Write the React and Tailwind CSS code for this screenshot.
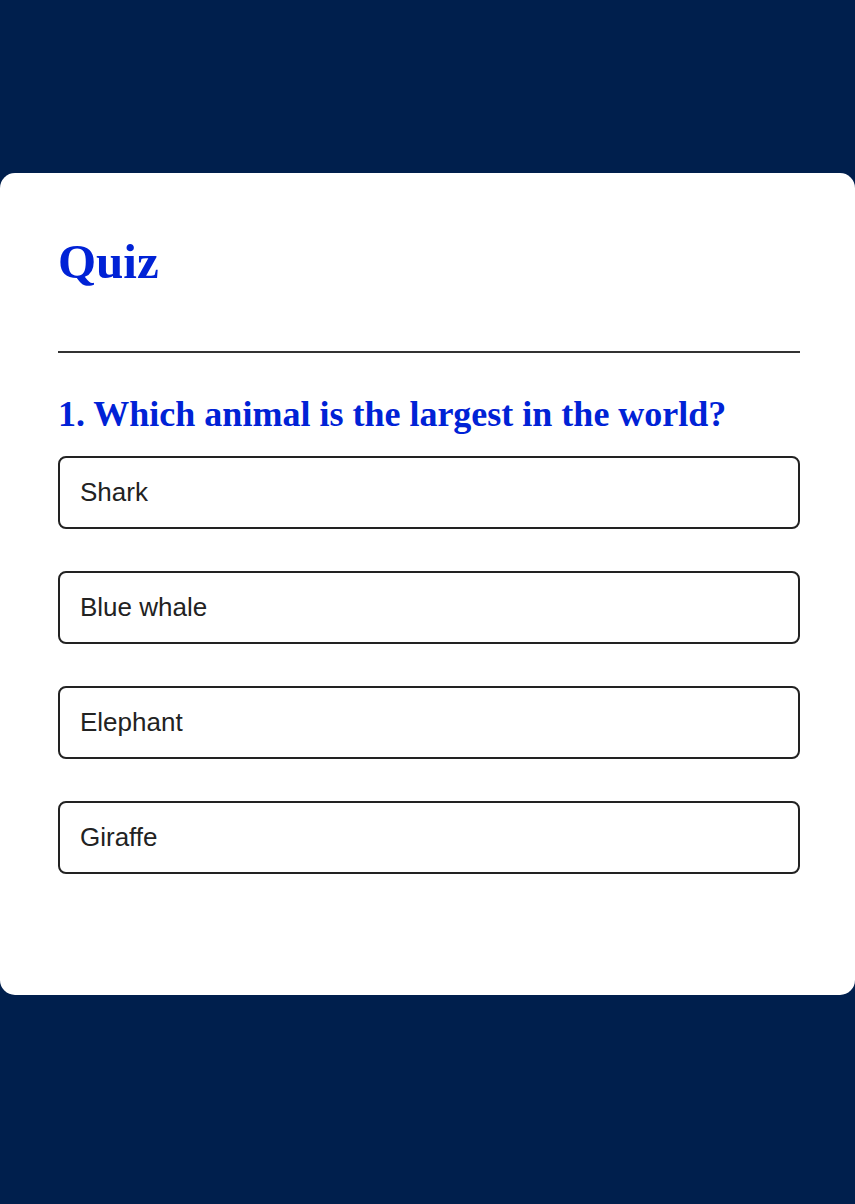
const options = ['Shark', 'Blue whale', 'Elephant', 'Giraffe']

export default function App() {
  return (
    <div className="min-h-[1204px] bg-[#001f4d] pt-[173px] pb-[209px]">
      <div className="bg-white rounded-[15px] pl-[58px] pr-[55px] pt-[61px] pb-[121px]">
        <h1 className="font-['Liberation_Serif',serif] font-bold text-[49px] leading-[1.13] text-[#0022d6]">
          Quiz
        </h1>
        <div className="mt-[62px] h-[2px] bg-[#333]" />
        <h2 className="mt-[41px] font-['Liberation_Serif',serif] font-bold text-[36px] leading-[1.15] text-[#0022d6]">
          1. Which animal is the largest in the world?
        </h2>
        <div className="mt-[20px] flex flex-col gap-[42px]">
          {options.map(opt => (
            <div
              key={opt}
              className="h-[73px] flex items-center border-2 border-[#222] rounded-[8px] px-[20px] font-['Liberation_Sans',Arial,sans-serif] text-[26px] text-[#222]"
            >
              {opt}
            </div>
          ))}
        </div>
      </div>
    </div>
  )
}
